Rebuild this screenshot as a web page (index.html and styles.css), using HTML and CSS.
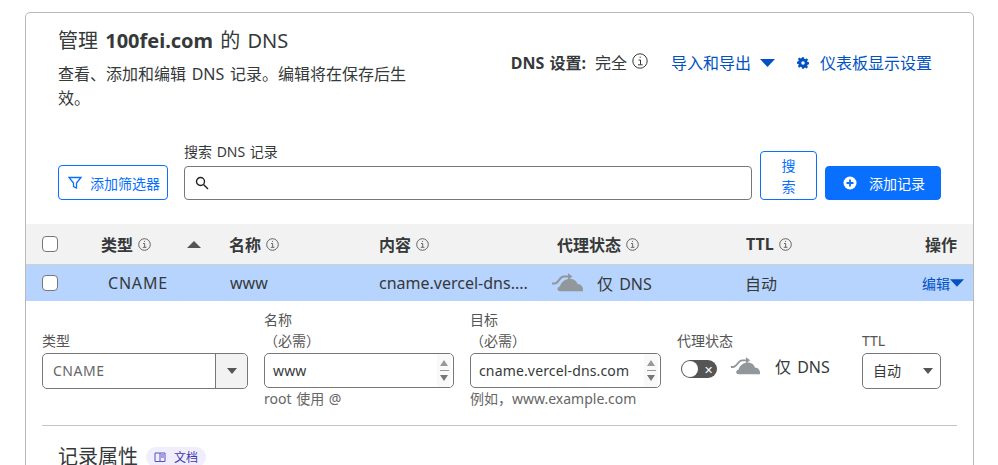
FILE: index.html
```html
<!DOCTYPE html>
<html>
<head>
  <meta charset="utf-8">
  <title>DNS</title>
  <link rel="stylesheet" href="styles.css">
</head>
<body>
  <div class="card">
    <div class="header">
      <div class="intro">
        <h2>管理 <b>100fei.com</b> 的 DNS</h2>
        <p>查看、添加和编辑 DNS 记录。编辑将在保存后生效。</p>
      </div>
      <div class="settings">
        <b>DNS 设置:</b>
        <span class="mode">完全</span>
        <svg class="info-big" viewBox="0 0 16 16"><circle cx="8" cy="8" r="7.2"/><path d="M6.5 7h2v4.6M6 11.8h4.6M7.6 4.2h1.2"/></svg>
        <a class="link export">导入和导出 <svg class="caret" viewBox="0 0 15 8"><path d="M0 0h15L7.5 8z"/></svg></a>
        <a class="link">
          <svg class="gear" viewBox="0 0 24 24"><path d="M10 1h4l.6 3.2 2 .9L19.4 3l2.8 3-2 2.7.8 2 3 .5v4l-3 .6-.8 2 1.800 2.700-2.800 2.800-2.800-1.800-2 .8L14 24h-4l-.6-3.200-2-.8-2.800 1.800-2.800-2.800L3.600 16.300l-.8-2L0 13.800v-4l2.800-.6.800-2-1.800-2.700 2.800-2.800 2.800 1.800 2-.9z" transform="translate(0 -.5)"/><circle cx="12" cy="12" r="3.500" fill="#fff"/></svg>
          仪表板显示设置
        </a>
      </div>
    </div>

    <div class="search-row">
      <button class="btn filter">
        <svg viewBox="0 0 14 14"><path d="M1 1.500h12L8.500 7v5l-3-1.500V7z"/></svg>
        添加筛选器
      </button>
      <div class="search">
        <label>搜索 DNS 记录</label>
        <div class="search-box">
          <svg viewBox="0 0 14 14"><circle cx="5.500" cy="5.500" r="4"/><path d="M8.500 8.500l4.500 4.500"/></svg>
        </div>
      </div>
      <button class="btn search-btn">搜索</button>
      <button class="btn add">
        <svg viewBox="0 0 16 16"><circle cx="8" cy="8" r="6.500" fill="#fff"/><path d="M8 4.500v7M4.500 8h7" stroke="#086fff" stroke-width="1.800"/></svg>
        添加记录
      </button>
    </div>

    <div class="table-head cols">
      <span class="check"></span>
      <span class="th type-th">类型 <svg class="info" viewBox="0 0 13 13"><circle cx="6.500" cy="6.500" r="5.800"/><path d="M5 5.500h1.700v3.600M4.800 9.300h3.600M6 3.400h1"/></svg><i class="sort"></i></span>
      <span class="th">名称 <svg class="info" viewBox="0 0 13 13"><circle cx="6.500" cy="6.500" r="5.800"/><path d="M5 5.500h1.700v3.600M4.800 9.300h3.600M6 3.400h1"/></svg></span>
      <span class="th">内容 <svg class="info" viewBox="0 0 13 13"><circle cx="6.500" cy="6.500" r="5.800"/><path d="M5 5.500h1.700v3.600M4.800 9.300h3.600M6 3.400h1"/></svg></span>
      <span class="th">代理状态 <svg class="info" viewBox="0 0 13 13"><circle cx="6.500" cy="6.500" r="5.800"/><path d="M5 5.500h1.700v3.600M4.800 9.300h3.600M6 3.400h1"/></svg></span>
      <span class="th">TTL <svg class="info" viewBox="0 0 13 13"><circle cx="6.500" cy="6.500" r="5.800"/><path d="M5 5.500h1.700v3.600M4.800 9.300h3.600M6 3.400h1"/></svg></span>
      <span class="th action-th">操作</span>
    </div>

    <div class="table-row cols">
      <span class="check"></span>
      <span class="type-cell">CNAME</span>
      <span class="name-cell">www</span>
      <span>cname.vercel-dns....</span>
      <span class="proxy">
        <svg class="cloud" viewBox="0 0 33 19"><path class="cloud-arrow" d="M1 10.500h2.500c4.500 0 4.500-7 9.500-7h5"/><path d="M17 .3l4.500 3.200-4.500 3.200zM9 18.300C6 18.300 5.500 14 9 13.500 10 8.500 15 5.700 19 5.700c4 0 7 2.800 7.500 5.300 3.500 0 6 3 5.500 7.300z"/></svg>
        <span>仅 DNS</span>
      </span>
      <span class="ttl-cell">自动</span>
      <a class="edit">编辑<svg class="caret" viewBox="0 0 15 8"><path d="M0 0h15L7.500 8z"/></svg></a>
    </div>

    <div class="edit-form">
      <label>类型</label>
      <label>名称<br>（必需）</label>
      <label>目标<br>（必需）</label>
      <label>代理状态</label>
      <label>TTL</label>

      <div class="select-box">
        <span class="select-value">CNAME</span>
        <span class="select-arrow"><i class="down"></i></span>
      </div>
      <div class="input-box">
        <span>www</span>
        <span class="spin"><i class="up"></i><i class="line"></i><i class="down"></i></span>
      </div>
      <div class="input-box">
        <span>cname.vercel-dns.com</span>
        <span class="spin"><i class="up"></i><i class="line"></i><i class="down"></i></span>
      </div>
      <div class="proxy-field">
        <span class="toggle"><i class="knob"></i><span class="toggle-x">✕</span></span>
        <svg class="cloud" viewBox="0 0 33 19"><path class="cloud-arrow" d="M1 10.500h2.500c4.500 0 4.500-7 9.500-7h5"/><path d="M17 .3l4.500 3.200-4.500 3.200zM9 18.300C6 18.300 5.500 14 9 13.500 10 8.500 15 5.700 19 5.700c4 0 7 2.800 7.500 5.300 3.500 0 6 3 5.500 7.300z"/></svg>
        <span class="proxy-label">仅 DNS</span>
      </div>
      <div class="ttl-box">
        <span>自动</span>
        <i class="down"></i>
      </div>

      <div class="hint"></div>
      <div class="hint">root 使用 @</div>
      <div class="hint">例如，www.example.com</div>
    </div>

    <div class="divider"></div>

    <div class="attrs">
      <h3>记录属性</h3>
      <span class="badge">
        <svg viewBox="0 0 12 12"><path d="M1 2h10v8.500H1zM6 2v8.500M7 4h3M7 6h3"/></svg>
        文档
      </span>
    </div>
  </div>
</body>
</html>
```

FILE: styles.css
```css
/* DNS records page */
html, body {
  height: 465px;
  overflow: hidden;
}

body {
  margin: 0;
  padding: 12px 0 0 25px;
  box-sizing: border-box;
  font-family: "Noto Sans", "Noto Sans CJK SC", sans-serif;
  font-size: 16px;
  color: #36393a;
  background: #fff;
}

svg {
  display: block;
  flex: none;
}

.card {
  width: 949px;
  height: 600px;
  box-sizing: border-box;
  border: 1px solid #b9b9b9;
  border-radius: 5px;
}

/* top part */
.header {
  display: flex;
  justify-content: space-between;
  align-items: center;
  padding: 13px 41px 0 32px;
}

.intro {
  width: 355px;
}

.intro h2 {
  margin: 0;
  font-size: 20px;
  font-weight: 400;
  line-height: 30px;
  word-spacing: 2px;
}

.intro p {
  margin: 6px 0 0;
  line-height: 24px;
  word-spacing: 1.5px;
}

.settings {
  display: flex;
  align-items: center;
  line-height: 24px;
  margin-bottom: 10px;
}

.settings b {
  word-spacing: 1px;
}

.mode {
  margin-left: 9px;
}

.info-big {
  width: 16px;
  height: 16px;
  margin: -4px 0 0 5px;
  fill: none;
  stroke: #36393a;
}

.link {
  display: flex;
  align-items: center;
  color: #0051c3;
  gap: 9px;
}

.export {
  margin: 0 22px 0 23px;
}

.caret {
  width: 15px;
  height: 8px;
  fill: #0051c3;
}

.gear {
  width: 12px;
  height: 12px;
  fill: #0051c3;
  margin-right: 2px;
}

/* search */
.search-row {
  display: flex;
  align-items: flex-end;
  margin-top: 31px;
  padding: 0 32px;
}

.btn {
  font-family: inherit;
  font-size: 14px;
  border-radius: 4px;
  border: 1px solid #086fff;
  background: #fff;
  color: #086fff;
  box-sizing: border-box;
  padding: 0;
}

.filter {
  display: flex;
  align-items: center;
  width: 110px;
  height: 35px;
  padding-left: 9px;
  gap: 8px;
  font-size: 14px;
}

.filter svg {
  width: 14px;
  height: 14px;
  fill: none;
  stroke: #086fff;
  stroke-width: 1.300;
}

.search {
  flex: 1;
  margin-left: 16px;
}

.search label {
  display: block;
  font-size: 14px;
  line-height: 21px;
  margin-bottom: 4px;
  word-spacing: 1px;
}

.search-box {
  display: flex;
  align-items: center;
  height: 34px;
  box-sizing: border-box;
  padding-left: 10px;
  border: 1px solid #777;
  border-radius: 4px;
}

.search-box svg {
  width: 14px;
  height: 14px;
  fill: none;
  stroke: #222;
  stroke-width: 1.400;
}

.search-btn {
  width: 57px;
  height: 49px;
  margin-left: 8px;
  padding: 0 20px;
  line-height: 21px;
}

.add {
  display: flex;
  align-items: center;
  width: 116px;
  height: 34px;
  margin-left: 8px;
  padding-left: 16px;
  gap: 11px;
  color: #fff;
  background: #086fff;
}

.add svg {
  width: 16px;
  height: 16px;
  fill: none;
}

/* table */
.cols {
  display: grid;
  grid-template-columns: 59px 128px 150px 178px 189px 1fr auto;
  align-items: center;
  padding: 0 16px;
}

.table-head {
  height: 41px;
  margin-top: 24px;
  box-sizing: border-box;
  background: #f2f2f2;
  border-bottom: 1px solid #cfcfcf;
}

.check {
  display: block;
  width: 16px;
  height: 16px;
  box-sizing: border-box;
  background: #fff;
  border: 1px solid #777;
  border-radius: 4px;
}

.th {
  display: flex;
  align-items: center;
  gap: 5px;
  font-weight: 700;
}

.info {
  width: 13px;
  height: 13px;
  fill: none;
  stroke: #555;
  stroke-width: .9;
}

.sort {
  width: 0;
  height: 0;
  margin-left: 31px;
  border-left: 7px solid transparent;
  border-right: 7px solid transparent;
  border-bottom: 7px solid #555;
}

.table-row {
  height: 36px;
  box-sizing: border-box;
  padding-bottom: 1px;
  background: #b6d4fd;
}

.table-row .check {
  margin-top: 1px;
}

.type-cell {
  padding-left: 7px;
  letter-spacing: .8px;
}

.name-cell {
  padding-left: 1px;
}

.ttl-cell {
  margin-left: -1px;
}

.proxy {
  display: flex;
  align-items: center;
  gap: 13px;
  margin-left: -6px;
  word-spacing: 2px;
}

.cloud {
  width: 33px;
  height: 19px;
  fill: #92979b;
}

.cloud-arrow {
  fill: none;
  stroke: #92979b;
  stroke-width: 2;
}

.edit {
  display: flex;
  align-items: center;
  margin: 0 -7px 0 -2px;
  font-size: 14px;
  color: #0051c3;
}

.edit .caret {
  width: 14px;
  height: 8px;
}

/* edit form */
.edit-form {
  display: grid;
  grid-template-columns: 206px 190px 191px 169px 79px;
  column-gap: 16px;
  padding: 8px 0 0 16px;
}

.edit-form label {
  align-self: end;
  font-size: 14px;
  line-height: 21px;
  color: #555;
  margin-bottom: 2px;
}

.select-box, .input-box, .ttl-box {
  display: flex;
  align-items: center;
  box-sizing: border-box;
  height: 36px;
  border: 1px solid #777;
  border-radius: 5px;
  font-size: 14px;
}

.select-box {
  color: #666;
  letter-spacing: .5px;
}

.select-value {
  flex: 1;
  padding: 0 0 2px 10px;
}

.select-arrow {
  display: flex;
  align-items: center;
  justify-content: center;
  align-self: stretch;
  width: 31px;
  background: #f2f2f2;
  border-left: 1px solid #777;
  border-radius: 0 5px 5px 0;
}

.down, .up {
  display: block;
  width: 0;
  height: 0;
  border-left: 5px solid transparent;
  border-right: 5px solid transparent;
}

.down {
  border-top: 6px solid #555;
}

.up {
  border-bottom: 6px solid #555;
}

.input-box {
  height: 35px;
  padding-left: 8px;
  justify-content: space-between;
  letter-spacing: .15px;
}

.spin {
  display: flex;
  flex-direction: column;
  align-items: center;
  align-self: stretch;
  justify-content: center;
  gap: 4px;
  width: 14px;
  margin-right: 2px;
  background: #f9f9f9;
}

.spin .up, .spin .down {
  border-left-width: 4px;
  border-right-width: 4px;
  border-top-color: #777;
  border-bottom-color: #999;
}

.spin .line {
  display: block;
  width: 9px;
  height: 1px;
  background: #999;
}

.proxy-field {
  display: flex;
  align-items: center;
  align-self: start;
  height: 26px;
  padding-left: 4px;
}

.proxy-label {
  word-spacing: 2px;
}

.toggle {
  display: flex;
  align-items: center;
  justify-content: space-between;
  box-sizing: border-box;
  width: 36px;
  height: 18px;
  padding: 0 4px 0 1px;
  margin-top: 6px;
  background: #555;
  border-radius: 9px;
}

.knob {
  width: 16px;
  height: 16px;
  background: #fff;
  border-radius: 50%;
}

.toggle-x {
  font-size: 11px;
  line-height: 1;
  color: #fff;
}

.proxy-field .cloud {
  margin: 0 14px 0 13px;
  width: 31px;
  height: 22px;
}

.ttl-box {
  justify-content: space-between;
  padding: 0 7px 0 10px;
}

.ttl-box span {
  padding-bottom: 2px;
}

.hint {
  font-size: 14px;
  line-height: 19px;
  color: #666;
  word-spacing: 1px;
}

.divider {
  height: 1px;
  margin: 17px 16px 0;
  background: #c4c4c4;
}

.attrs {
  display: flex;
  align-items: center;
  gap: 8px;
  margin-top: 16px;
  padding-left: 32px;
}

.attrs h3 {
  margin: 0;
  font-size: 20px;
  font-weight: 400;
  line-height: 30px;
}

.badge {
  display: flex;
  align-items: center;
  gap: 8px;
  height: 20px;
  padding: 0 8px;
  font-size: 12px;
  color: #3f36b0;
  background: #f0eefd;
  border-radius: 10px;
}

.badge svg {
  width: 12px;
  height: 12px;
  fill: none;
  stroke: #5b50c8;
}
```
